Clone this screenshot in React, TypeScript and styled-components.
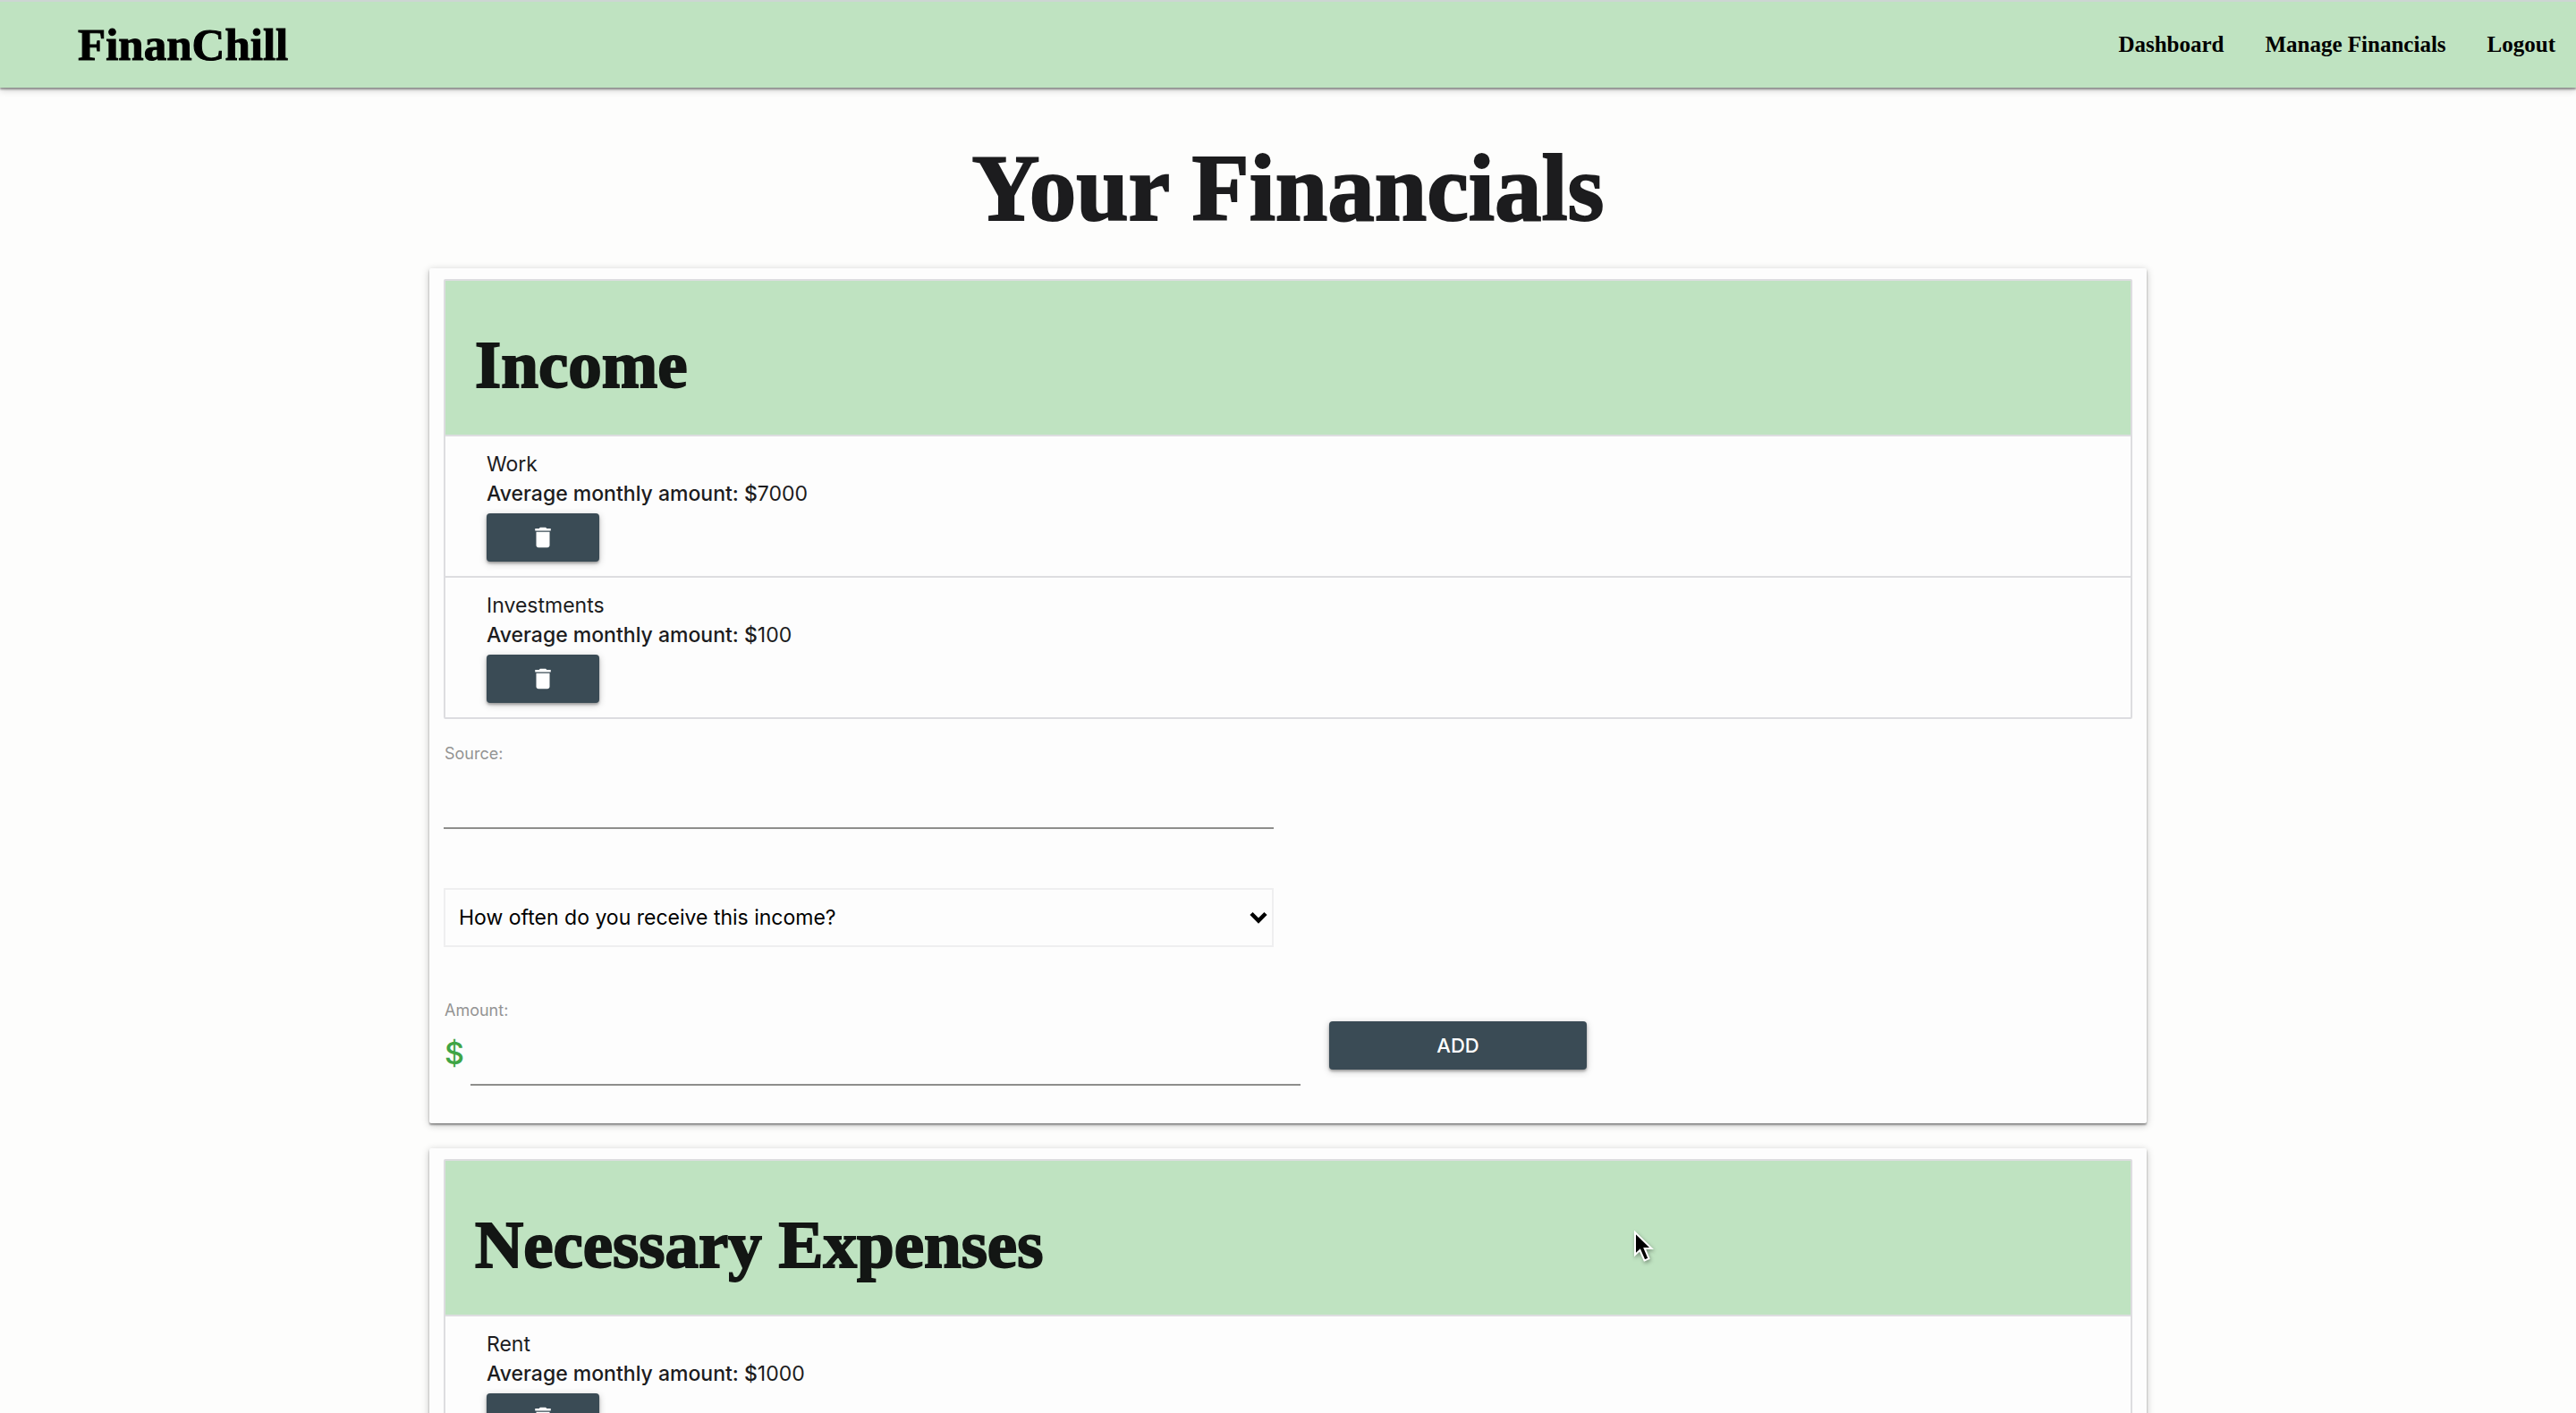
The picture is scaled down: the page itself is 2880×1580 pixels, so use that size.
import React, { useId } from "react";
import styled, { createGlobalStyle } from "styled-components";

const slab = `"Liberation Serif", "Noto Serif", serif`;
const sans = `Inter, Roboto, "Liberation Sans", sans-serif`;

const GlobalStyle = createGlobalStyle`
  *, *::before, *::after { box-sizing: border-box; }
  body {
    margin: 0;
    background: #fdfdfc;
    color: #1c1c1e;
    font-family: ${sans};
    font-size: 23px;
    line-height: 33px;
  }
`;

const Page = styled.div`
  position: relative;
  height: 100vh;
  overflow: hidden;
`;

const NavBar = styled.header`
  display: flex;
  align-items: center;
  justify-content: space-between;
  height: 98px;
  padding: 0 23px 0 87px;
  border-top: 2px solid #cdd6d3;
  background: #bfe3c1;
  box-shadow: 0 2px 2px rgba(0, 0, 0, 0.36), 0 2px 8px rgba(0, 0, 0, 0.24);
`;

const Brand = styled.a`
  color: #000;
  font: 700 51px/56px ${slab};
  -webkit-text-stroke: 1px currentColor;
  text-decoration: none;
`;

const NavLinks = styled.nav`
  display: flex;
  gap: 46px;
`;

const NavLink = styled.a`
  color: #000;
  font: 700 25px/28px ${slab};
  text-decoration: none;
`;

const Main = styled.main`
  display: flex;
  flex-direction: column;
  gap: 28px;
  width: 66.6667%;
  margin: 0 auto;
`;

const PageTitle = styled.h1`
  margin: 56px 0 4px;
  font: 700 105px/114px ${slab};
  -webkit-text-stroke: 2px currentColor;
  text-align: center;
`;

const Card = styled.section`
  padding: 12px 16px 42px;
  border-radius: 2px;
  background: #fdfdfd;
  box-shadow: 0 2px 2px rgba(0, 0, 0, 0.36), 0 2px 8px rgba(0, 0, 0, 0.24);
`;

const Collection = styled.div`
  border: 2px solid #dddde0;
  border-radius: 2px;
`;

const CollectionHeader = styled.header`
  display: flex;
  align-items: center;
  height: 172px;
  padding: 16px 33px 0;
  background: #bfe3c1;
`;

const SectionTitle = styled.h2`
  margin: 0;
  color: #131614;
  font: 700 75px/84px ${slab};
  -webkit-text-stroke: 2px currentColor;
`;

const Items = styled.ul`
  margin: 0;
  padding: 0;
  list-style: none;
`;

const Item = styled.li`
  padding: 15px 46px 16px;
  border-top: 2px solid #dddde0;
`;

const ItemName = styled.div`
  color: #1c1c1e;
`;

const ItemAmount = styled.div`
  margin-bottom: 5px;
`;

const AmountLabel = styled.span`
  font-weight: 500;
`;

const Button = styled.button<{ $width: number }>`
  display: flex;
  flex: none;
  align-items: center;
  justify-content: center;
  width: ${(p) => p.$width}px;
  height: 54px;
  padding: 0;
  border: 0;
  border-radius: 4px;
  background: #3a4b55;
  color: #fff;
  font: 500 22px/28px ${sans};
  box-shadow: 0 2px 3px rgba(0, 0, 0, 0.3), 0 2px 9px rgba(0, 0, 0, 0.2);
  cursor: pointer;
`;

const Form = styled.form`
  padding-top: 27px;
`;

const FieldLabel = styled.label`
  display: block;
  padding-left: 1px;
  color: #949494;
  font-size: 18px;
  line-height: 24px;
`;

const TextField = styled.input`
  display: block;
  flex: none;
  width: calc(50% - 16px);
  height: 72px;
  padding: 0;
  border: 0;
  border-bottom: 2px solid #8e8e8c;
  background: transparent;
  font: inherit;
  outline: none;
`;

const SelectBox = styled.div`
  position: relative;
  width: calc(50% - 16px);
  margin: 66px 0 59px;
`;

const Select = styled.select`
  display: block;
  width: 100%;
  height: 66px;
  padding: 0 40px 0 15px;
  border: 2px solid #efeff0;
  appearance: none;
  background: transparent;
  color: #000;
  font: inherit;
`;

const Chevron = styled.svg`
  position: absolute;
  top: 25px;
  right: 7px;
  pointer-events: none;
`;

const AmountRow = styled.div`
  display: flex;
  align-items: flex-start;
`;

const Currency = styled.span`
  flex: none;
  width: 30px;
  padding-left: 1px;
  color: #3fa545;
  font-size: 34px;
  font-weight: 500;
  line-height: 72px;
`;

const AddSlot = styled.div`
  margin-left: 32px;
`;

const Pointer = styled.svg`
  position: absolute;
  top: 1374px;
  left: 1824px;
  filter: drop-shadow(1px 2px 2px rgba(0, 0, 0, 0.35));
  pointer-events: none;
`;

const TrashIcon = () => (
  <svg width="30" height="30" viewBox="0 0 24 24" fill="currentColor" aria-hidden="true">
    <path d="M6 19c0 1.1.9 2 2 2h8c1.1 0 2-.9 2-2V7H6v12zM19 4h-3.5l-1-1h-5l-1 1H5v2h14V4z" />
  </svg>
);

type Entry = { name: string; amount: number };

function Section({ title, entries, children }: { title: string; entries: Entry[]; children?: React.ReactNode }) {
  return (
    <Card>
      <Collection>
        <CollectionHeader>
          <SectionTitle>{title}</SectionTitle>
        </CollectionHeader>
        <Items>
          {entries.map((entry) => (
            <Item key={entry.name}>
              <ItemName>{entry.name}</ItemName>
              <ItemAmount>
                <AmountLabel>Average monthly amount: $</AmountLabel>
                {entry.amount}
              </ItemAmount>
              <Button type="button" $width={126} aria-label={`Delete ${entry.name}`}>
                <TrashIcon />
              </Button>
            </Item>
          ))}
        </Items>
      </Collection>
      {children}
    </Card>
  );
}

function IncomeForm() {
  const id = useId();
  return (
    <Form onSubmit={(e) => e.preventDefault()}>
      <FieldLabel htmlFor={`${id}-source`}>Source:</FieldLabel>
      <TextField id={`${id}-source`} type="text" />
      <SelectBox>
        <Select aria-label="How often do you receive this income?" defaultValue="">
          <option value="">How often do you receive this income?</option>
        </Select>
        <Chevron width="20" height="16" viewBox="0 0 20 16" aria-hidden="true">
          <path d="M2 3.500 10 11.500 18 3.500" fill="none" stroke="#000" strokeWidth="4.500" />
        </Chevron>
      </SelectBox>
      <FieldLabel htmlFor={`${id}-amount`}>Amount:</FieldLabel>
      <AmountRow>
        <Currency>$</Currency>
        <TextField id={`${id}-amount`} type="text" inputMode="decimal" />
        <AddSlot>
          <Button type="submit" $width={288}>ADD</Button>
        </AddSlot>
      </AmountRow>
    </Form>
  );
}

export default function App() {
  return (
    <Page>
      <GlobalStyle />
      <NavBar>
        <Brand href="#">FinanChill</Brand>
        <NavLinks>
          <NavLink href="#dashboard">Dashboard</NavLink>
          <NavLink href="#manage">Manage Financials</NavLink>
          <NavLink href="#logout">Logout</NavLink>
        </NavLinks>
      </NavBar>
      <Main>
        <PageTitle>Your Financials</PageTitle>
        <Section
          title="Income"
          entries={[
            { name: "Work", amount: 7000 },
            { name: "Investments", amount: 100 },
          ]}
        >
          <IncomeForm />
        </Section>
        <Section title="Necessary Expenses" entries={[{ name: "Rent", amount: 1000 }]} />
      </Main>
      <Pointer width="28" height="40" viewBox="0 0 28 40" aria-hidden="true">
        <path
          d="M4 4v25l5.500-5 5 11.500 5-2.200-4.800-11.300H22.500z"
          fill="#000"
          stroke="#fff"
          strokeWidth="2"
        />
      </Pointer>
    </Page>
  );
}
